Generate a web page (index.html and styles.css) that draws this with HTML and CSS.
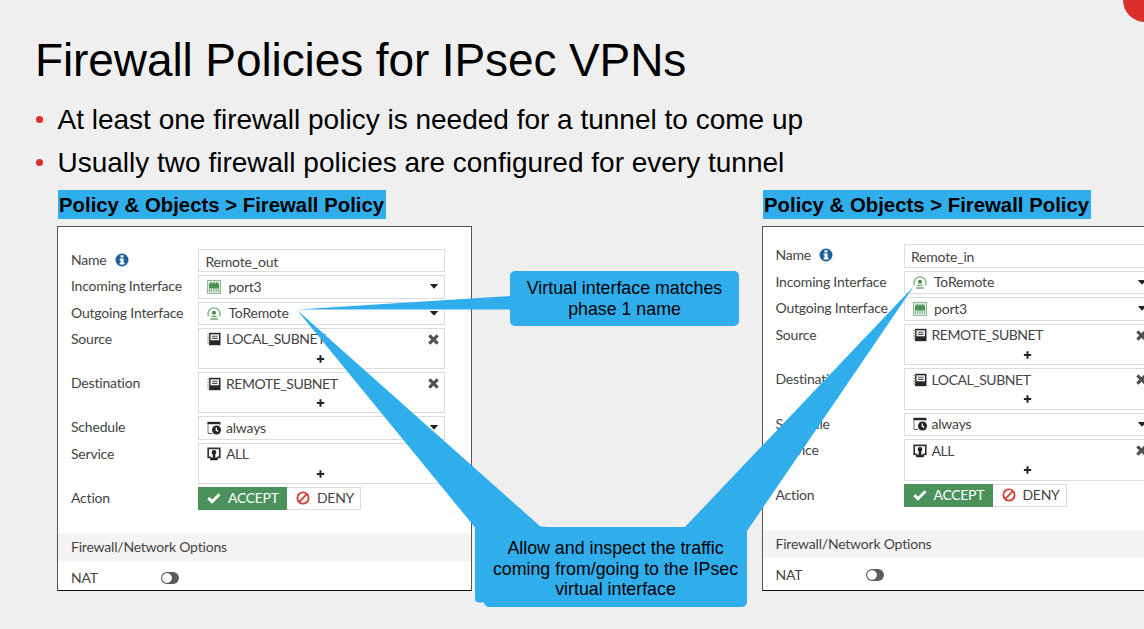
FILE: index.html
```html
<!DOCTYPE html>
<html lang="en">
<head>
<meta charset="utf-8">
<title>Firewall Policies for IPsec VPNs</title>
<link rel="stylesheet" href="styles.css">
</head>
<body>
<svg class="sprite" aria-hidden="true">
  <symbol id="i-info" viewBox="0 0 14 14"><circle cx="7" cy="7" r="6.500" fill="#1f5f99"/><path d="M5.500 2.200h3v2.300h-3zM4.700 5.500h3.900v4.300h1v1.800H4.600V9.800h1V7.300h-.9z" fill="#fff"/></symbol>
  <symbol id="i-port" viewBox="0 0 14 14"><rect x=".5" y=".5" width="13" height="13" fill="#dcebdd" stroke="#8fbb94"/><path d="M2 8.500V3.500h1.500V2.200H5v1.300h1.200V2.200h1.600v1.300H9V2.200h1.500v1.300H12v5z" fill="#4a8f54"/><path d="M2.500 9v3M4.700 9v3M7 9v3M9.300 9v3M11.500 9v3" stroke="#7db184" stroke-width="1"/></symbol>
  <symbol id="i-tunnel" viewBox="0 0 14 14"><path d="M1.500 10.300A6 6 0 1 1 12.500 10.300" fill="none" stroke="#7fb286" stroke-width="1.400"/><circle cx="7" cy="6.800" r="2" fill="#458b50"/><path d="M4.300 10.400h5.400M3.300 13h7.400" stroke="#6aa572" stroke-width="1.300"/></symbol>
  <symbol id="i-address" viewBox="0 0 14 14"><path d="M2 .8h11.500v12.400H2z" fill="#262626"/><path d="M3.500 2.300h8.500v6H3.500z" fill="#f3f3f3"/><path d="M5 4.200h5.500M5 6.400h5.500" stroke="#555" stroke-width="1.100"/><path d="M.3 2.500h2.500M.3 5.300h2.500M.3 8.100h2.500M.3 10.900h2.500" stroke="#a98f6d" stroke-width="1.200"/></symbol>
  <symbol id="i-schedule" viewBox="0 0 14 14"><path d="M1 12.400V1.500h11.800v3" fill="none" stroke="#777" stroke-width="1"/><path d="M.5.800h12.800v2.400H.5z" fill="#262626"/><path d="M1 12.400h4" stroke="#555"/><circle cx="9.500" cy="9" r="4.500" fill="#262626"/><path d="M9.300 6.400v3l1.900 1" fill="none" stroke="#fff" stroke-width="1.300"/></symbol>
  <symbol id="i-service" viewBox="0 0 14 14"><path d="M4.300 10.300H1.200V1.400h11.600v8.900H9.700" fill="none" stroke="#333" stroke-width="1.700"/><circle cx="7" cy="5.200" r="2.300" fill="#222"/><path d="M5.700 6h2.600v4.800h2.500v2.400H3.200v-2.400h2.500z" fill="#222"/></symbol>
  <symbol id="i-check" viewBox="0 0 14 12"><path d="M1.300 6.200l3.700 3.500L12.500 2.200" fill="none" stroke="#fff" stroke-width="3"/></symbol>
  <symbol id="i-deny" viewBox="0 0 14 14"><circle cx="7" cy="7" r="5.600" fill="none" stroke="#d2433c" stroke-width="1.900"/><path d="M3.200 10.800l7.600-7.600" stroke="#d2433c" stroke-width="1.900"/></symbol>
  <symbol id="i-caret" viewBox="0 0 10 5"><path d="M.8 0h8.400L5 4.800z" fill="#222"/></symbol>
  <symbol id="i-remove" viewBox="0 0 10 10"><path d="M1.200 1.200l7.600 7.600M8.800 1.200L1.200 8.800" stroke="#505050" stroke-width="2.800"/></symbol>
  <symbol id="i-plus" viewBox="0 0 8 8"><path d="M4 .2v7.600M.2 4h7.600" stroke="#222" stroke-width="2"/></symbol>
</svg>

<main class="slide">
  <span class="corner-dot"></span>
  <h1 class="title">Firewall Policies for IPsec VPNs</h1>
  <ul class="bullets">
    <li>At least one firewall policy is needed for a tunnel to come up</li>
    <li>Usually two firewall policies are configured for every tunnel</li>
  </ul>

  <div class="columns">
    <section class="column">
      <h2 class="path">Policy &amp; Objects &gt; Firewall Policy</h2>
      <div class="panel">
        <div class="row"><span class="label">Name <svg class="info"><use href="#i-info"/></svg></span><div class="field name">Remote_out</div></div>
        <div class="row"><span class="label">Incoming Interface</span><div class="field iface"><svg class="icon"><use href="#i-port"/></svg>port3<svg class="caret"><use href="#i-caret"/></svg></div></div>
        <div class="row"><span class="label">Outgoing Interface</span><div class="field iface"><svg class="icon"><use href="#i-tunnel"/></svg>ToRemote<svg class="caret"><use href="#i-caret"/></svg></div></div>
        <div class="row tall"><span class="label">Source</span><div class="field multi"><div class="entry"><svg class="icon"><use href="#i-address"/></svg>LOCAL_SUBNET<svg class="remove"><use href="#i-remove"/></svg></div><svg class="plus"><use href="#i-plus"/></svg></div></div>
        <div class="row tall"><span class="label">Destination</span><div class="field multi"><div class="entry"><svg class="icon"><use href="#i-address"/></svg>REMOTE_SUBNET<svg class="remove"><use href="#i-remove"/></svg></div><svg class="plus"><use href="#i-plus"/></svg></div></div>
        <div class="row"><span class="label">Schedule</span><div class="field"><svg class="icon"><use href="#i-schedule"/></svg>always<svg class="caret"><use href="#i-caret"/></svg></div></div>
        <div class="row tall"><span class="label">Service</span><div class="field multi"><div class="entry"><svg class="icon"><use href="#i-service"/></svg>ALL</div><svg class="plus"><use href="#i-plus"/></svg></div></div>
        <div class="row"><span class="label">Action</span><div class="actions"><span class="accept"><svg class="check"><use href="#i-check"/></svg>ACCEPT</span><span class="deny"><svg class="icon"><use href="#i-deny"/></svg>DENY</span></div></div>
        <div class="band">Firewall/Network Options</div>
        <div class="nat"><span class="label">NAT</span><span class="toggle"></span></div>
      </div>
    </section>

    <section class="column">
      <h2 class="path">Policy &amp; Objects &gt; Firewall Policy</h2>
      <div class="panel inbound">
        <div class="row"><span class="label">Name <svg class="info"><use href="#i-info"/></svg></span><div class="field name">Remote_in</div></div>
        <div class="row"><span class="label">Incoming Interface</span><div class="field iface"><svg class="icon"><use href="#i-tunnel"/></svg>ToRemote<svg class="caret"><use href="#i-caret"/></svg></div></div>
        <div class="row"><span class="label">Outgoing Interface</span><div class="field iface"><svg class="icon"><use href="#i-port"/></svg>port3<svg class="caret"><use href="#i-caret"/></svg></div></div>
        <div class="row tall"><span class="label">Source</span><div class="field multi"><div class="entry"><svg class="icon"><use href="#i-address"/></svg>REMOTE_SUBNET<svg class="remove"><use href="#i-remove"/></svg></div><svg class="plus"><use href="#i-plus"/></svg></div></div>
        <div class="row tall"><span class="label">Destination</span><div class="field multi"><div class="entry"><svg class="icon"><use href="#i-address"/></svg>LOCAL_SUBNET<svg class="remove"><use href="#i-remove"/></svg></div><svg class="plus"><use href="#i-plus"/></svg></div></div>
        <div class="row"><span class="label">Schedule</span><div class="field"><svg class="icon"><use href="#i-schedule"/></svg>always<svg class="caret"><use href="#i-caret"/></svg></div></div>
        <div class="row tall"><span class="label">Service</span><div class="field multi"><div class="entry"><svg class="icon"><use href="#i-service"/></svg>ALL<svg class="remove"><use href="#i-remove"/></svg></div><svg class="plus"><use href="#i-plus"/></svg></div></div>
        <div class="row"><span class="label">Action</span><div class="actions"><span class="accept"><svg class="check"><use href="#i-check"/></svg>ACCEPT</span><span class="deny"><svg class="icon"><use href="#i-deny"/></svg>DENY</span></div></div>
        <div class="band">Firewall/Network Options</div>
        <div class="nat"><span class="label">NAT</span><span class="toggle"></span></div>
      </div>
    </section>
  </div>

  <svg class="pointers" viewBox="0 0 1144 629" aria-hidden="true">
    <path d="M297 309.500L511 296v13.500z"/>
    <path d="M297 310L541.500 527.500H475z"/>
    <path d="M914 286L684.500 527.500L747 531z"/>
    <path d="M475 526.500h70v76h-66q-4 0-4-4z"/>
  </svg>
  <div class="callout callout-phase">Virtual interface matches<br>phase 1 name</div>
  <div class="callout callout-traffic">Allow and inspect the traffic<br>coming from/going to the IPsec<br>virtual interface</div>
</main>
</body>
</html>
```
FILE: styles.css
```css
* { box-sizing: border-box; }

body {
  margin: 0;
  background: #efefef;
  font-family: "Liberation Sans", Arial, sans-serif;
  color: #000;
}

.sprite { position: absolute; width: 0; height: 0; }

.slide {
  position: relative;
  width: 1144px;
  height: 629px;
  overflow: hidden;
  padding-top: 33px;
}

.corner-dot {
  position: absolute;
  left: 1122.500px;
  top: -22px;
  width: 44px;
  height: 44px;
  border-radius: 50%;
  background: #da2e29;
}

.title {
  margin: 0 0 0 35px;
  font-size: 46px;
  font-weight: 400;
  letter-spacing: -.1px;
  line-height: 54px;
  white-space: nowrap;
}

.bullets {
  margin: 11px 0 0 35px;
  padding: 0;
  list-style: none;
  font-size: 28px;
  line-height: 43px;
}

.bullets li { display: flex; align-items: center; white-space: nowrap; }
.bullets li::before {
  content: "";
  width: 7.500px;
  height: 7.500px;
  margin: 0 14.200px 0 .8px;
  border-radius: 50%;
  background: #da2e29;
}

.columns {
  display: grid;
  grid-template-columns: 415px 422px;
  column-gap: 290px;
  margin: 6px 0 0 57px;
}

.path {
  width: 328.500px;
  height: 29px;
  margin: 0 0 7px .5px;
  padding: 1px 0 0 1.500px;
  background: #30aeec;
  font-size: 20.350px;
  line-height: 29px;
  white-space: nowrap;
}

.panel {
  --single: 26.300px;
  --double: 44.200px;
  --label: 127px;
  --field: 247px;
  height: 365px;
  padding-top: 22px;
  background: #fff;
  border: 1px solid #555;
  border-bottom-color: #111;
  font: 14px/23px Lato, sans-serif;
  letter-spacing: -.2px;
  color: #444;
}

.inbound {
  --single: 26.500px;
  --double: 44.600px;
  --label: 128px;
  --field: 249px;
  padding-top: 17px;
}

.row, .nat { display: flex; height: var(--single); padding-left: 13px; white-space: nowrap; }
.inbound .row, .inbound .nat, .inbound .band { padding-left: 12.500px; }
.tall { height: var(--double); }
.label { flex: none; width: var(--label); line-height: 22px; }
.info { width: 14px; height: 14px; margin-left: 5px; vertical-align: -2px; }

.field {
  display: flex;
  align-items: center;
  width: var(--field);
  height: calc(100% - 3px);
  padding: 0 5px 0 8px;
  border: 1px solid #dcdcdc;
  background: #fff;
  line-height: 22px;
}

.field.name { padding-left: 6.500px; padding-top: 2px; }
.icon { flex: none; width: 14px; height: 14px; margin-right: 5px; }
.iface .icon { margin-right: 7.500px; }
.caret { width: 10px; height: 5px; margin-left: auto; }

.multi { display: block; letter-spacing: -.45px; }
.entry { display: flex; align-items: center; height: 21px; }
.remove { width: 11px; height: 11px; margin-left: auto; }
.plus { display: block; width: 8px; height: 8px; margin: 5px auto 0; transform: translateX(-2.500px); }

.actions { display: flex; height: 23px; line-height: 21px; letter-spacing: -.3px; }
.accept, .deny { display: flex; align-items: center; padding-bottom: 1px; }
.accept { width: 89px; padding-left: 9px; background: #4a9259; color: #fff; }
.check { width: 14px; height: 12px; margin-right: 7px; }
.deny { width: 74px; padding-left: 9px; border: 1px solid #dcdcdc; border-left: 0; }
.deny .icon { margin-right: 7px; }

.band { height: 28px; margin-top: 20px; padding-left: 13px; background: #f4f4f4; line-height: 28px; }

.nat { align-items: center; height: 34px; }
.nat .label { width: 90px; }
.toggle {
  width: 18px;
  height: 12px;
  border-radius: 6px;
  background: radial-gradient(circle at 6px 6px, #fff 4.400px, #5c5c5c 5.200px);
}

.pointers { position: absolute; inset: 0; width: 1144px; height: 629px; fill: #30aeec; }

.callout {
  position: absolute;
  border-radius: 5px;
  background: #30aeec;
  font-size: 17.800px;
  line-height: 20.500px;
  text-align: center;
  white-space: nowrap;
}

.callout-phase { left: 510px; top: 270.500px; width: 229px; height: 55.500px; padding-top: 7.500px; }
.callout-traffic { left: 484px; top: 526.500px; width: 263px; height: 80px; padding-top: 11.500px; border-radius: 0 0 5px 5px; }
```
